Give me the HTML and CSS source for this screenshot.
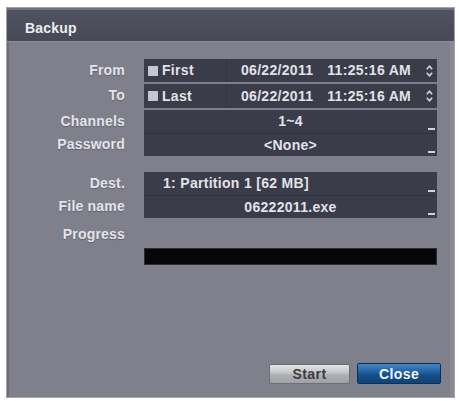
FILE: index.html
```html
<!DOCTYPE html>
<html>
<head>
<meta charset="utf-8">
<title>Backup</title>
<link rel="stylesheet" href="styles.css">
</head>
<body>
<div class="dialog">
  <div class="titlebar">Backup</div>
  <div class="content">
    <div class="form">
      <div class="row r-from">
        <div class="label">From</div>
        <div class="field split">
          <div class="check-part"><span class="check"></span><span>First</span></div>
          <div class="date-part">
            <span class="date">06/22/2011</span><span class="time">11:25:16 AM</span>
            <svg class="spin" width="7" height="14" viewBox="0 0 7 14"><path d="M0.8 5.2 L3.5 2.2 L6.2 5.2 M0.8 8.8 L3.5 11.8 L6.2 8.8" fill="none" stroke="#d6d6de" stroke-width="1.6"/></svg>
          </div>
        </div>
      </div>
      <div class="row r-to">
        <div class="label">To</div>
        <div class="field split">
          <div class="check-part"><span class="check"></span><span>Last</span></div>
          <div class="date-part">
            <span class="date">06/22/2011</span><span class="time">11:25:16 AM</span>
            <svg class="spin" width="7" height="14" viewBox="0 0 7 14"><path d="M0.8 5.2 L3.5 2.2 L6.2 5.2 M0.8 8.8 L3.5 11.8 L6.2 8.8" fill="none" stroke="#d6d6de" stroke-width="1.6"/></svg>
          </div>
        </div>
      </div>
      <div class="row r-channels">
        <div class="label">Channels</div>
        <div class="field dd"><span class="val">1~4</span><span class="dash"></span></div>
      </div>
      <div class="row r-password">
        <div class="label">Password</div>
        <div class="field dd sep"><span class="val">&lt;None&gt;</span><span class="dash"></span></div>
      </div>
      <div class="row r-dest">
        <div class="label">Dest.</div>
        <div class="field dd left"><span class="val">1: Partition 1 [62 MB]</span><span class="dash"></span></div>
      </div>
      <div class="row r-file">
        <div class="label">File name</div>
        <div class="field dd sep"><span class="val">06222011.exe</span><span class="dash"></span></div>
      </div>
      <div class="row r-progress">
        <div class="label">Progress</div>
      </div>
      <div class="progress-bar"></div>
    </div>
    <div class="buttons">
      <button class="btn btn-start">Start</button>
      <button class="btn btn-close">Close</button>
    </div>
  </div>
</div>
</body>
</html>
```

FILE: styles.css
```css
* {
  box-sizing: border-box;
}

html, body {
  margin: 0;
  background: #ffffff;
}

body {
  padding: 7px 4px 3px 6px;
  font-family: "Liberation Sans", Arial, sans-serif;
  font-weight: bold;
  font-size: 14px;
}

.dialog {
  width: 449px;
  height: 391px;
  display: flex;
  flex-direction: column;
  background: #7f808c;
  border: 1px solid #a2a3ab;
  box-shadow: inset 2px 0 0 #6c6d78, inset -4px 0 0 #878893;
}

.titlebar {
  height: 34px;
  padding: 10px 0 5px 18px;
  line-height: 16px;
  color: #ececf2;
  background: linear-gradient(#50525f, #474957);
  border-top: 2px solid #6f717d;
  border-bottom: 1px solid #8d8e99;
  letter-spacing: 0.2px;
}

.content {
  flex: 1;
  display: flex;
  flex-direction: column;
  padding: 17px 0 13px 0;
}

.form {
  display: flex;
  flex-direction: column;
}

.row {
  display: flex;
  column-gap: 19px;
  height: 23px;
}

.label {
  width: 118px;
  text-align: right;
  line-height: 23px;
  color: #e4e4ea;
  letter-spacing: 0.2px;
  text-shadow: 0 1px 1px rgba(40, 40, 50, 0.35);
}

.field {
  width: 293px;
  background: #3a3c4a;
  color: #e2e2e8;
  line-height: 23px;
  letter-spacing: 0.3px;
}

.r-from { margin-bottom: 2px; }
.r-to { height: 24px; margin-bottom: 2px; }
.r-password { margin-bottom: 16px; }
.r-file { margin-bottom: 5px; }

.sep {
  border-top: 1px solid #2f313d;
  line-height: 22px;
}

.split {
  display: flex;
  align-items: center;
}

.check-part {
  width: 82px;
  height: 100%;
  display: flex;
  align-items: center;
  padding-left: 4px;
}

.check {
  width: 10px;
  height: 10px;
  background: #c6c6ce;
  margin-right: 4px;
}

.date-part {
  flex: 1;
  height: 100%;
  display: flex;
  align-items: center;
  padding-left: 14px;
  padding-right: 4px;
  border-left: 1px solid #33353f;
}

.date {
  margin-right: 14px;
}

.spin {
  margin-left: auto;
  display: block;
}

.dd {
  display: grid;
  grid-template-columns: 14px 1fr 14px;
}

.dd .val {
  grid-column: 2;
  text-align: center;
  white-space: nowrap;
}

.dd.left {
  grid-template-columns: 19px 1fr 14px;
}

.dd.left .val {
  text-align: left;
}

.dash {
  grid-column: 3;
  justify-self: end;
  align-self: end;
  width: 7px;
  height: 2px;
  margin: 0 2px 3px 0;
  background: #d2d2da;
}

.progress-bar {
  margin-top: 2px;
  margin-left: 137px;
  width: 293px;
  height: 17px;
  background: #060609;
  border: 1px solid #2a2b33;
}

.buttons {
  margin-top: auto;
  display: flex;
  justify-content: flex-end;
  align-items: flex-end;
  gap: 7px;
  padding-right: 13px;
}

.btn {
  font-family: "Liberation Sans", Arial, sans-serif;
  font-weight: bold;
  font-size: 14px;
  padding: 0;
  border-radius: 2px;
  line-height: 18px;
}

.btn-start {
  width: 81px;
  height: 20px;
  color: #3c3d48;
  letter-spacing: 0.4px;
  background: linear-gradient(#e4e4e6, #c3c4c7 45%, #aeafb3 55%, #a2a3a8);
  border: 1px solid #6d6e77;
}

.btn-close {
  width: 84px;
  height: 21px;
  color: #f2f6fb;
  letter-spacing: 0.4px;
  background: linear-gradient(#4585c2, #1f5f9e 45%, #14508c 55%, #0f4377);
  border: 1px solid #0c2f55;
}
```
